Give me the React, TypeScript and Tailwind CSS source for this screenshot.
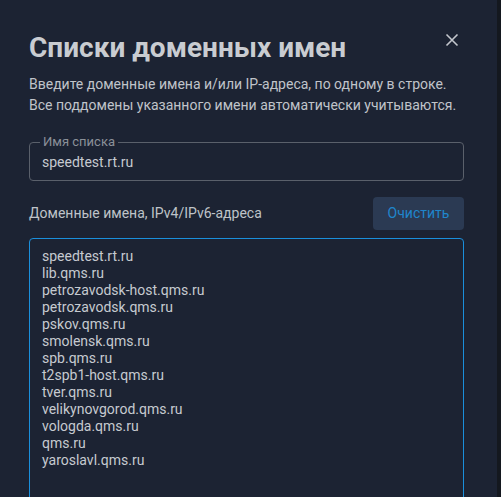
import { useState } from "react"

const domains = [
  "speedtest.rt.ru",
  "lib.qms.ru",
  "petrozavodsk-host.qms.ru",
  "petrozavodsk.qms.ru",
  "pskov.qms.ru",
  "smolensk.qms.ru",
  "spb.qms.ru",
  "t2spb1-host.qms.ru",
  "tver.qms.ru",
  "velikynovgorod.qms.ru",
  "vologda.qms.ru",
  "qms.ru",
  "yaroslavl.qms.ru",
]

export default function App() {
  const [name, setName] = useState("speedtest.rt.ru")
  const [list, setList] = useState(domains.join("\n"))

  return (
    <div className="flex h-[497px] w-[501px] overflow-hidden bg-[#13171e] font-['Roboto',sans-serif]">
      <div className="relative flex-1 bg-[#1c2333] pl-[29px] pr-[33px] pt-[30px] text-[#c6cad0]">
        <button className="absolute right-[38px] top-[33px] text-[#c3c7cd]">
          <svg width="14" height="14" viewBox="0 0 14 14" fill="none" stroke="currentColor" strokeWidth="1.6">
            <path d="M1.5 1.5 12.5 12.5M12.5 1.5 1.5 12.5" />
          </svg>
        </button>

        <h1 className="text-[28px] font-bold leading-[36px] text-[#c9ccd1]">Списки доменных имен</h1>
        <p className="mt-[8px] text-[14px] leading-[21px] text-[#c0c4ca]">
          Введите доменные имена и/или IP-адреса, по одному в строке.
          <br />
          Все поддомены указанного имени автоматически учитываются.
        </p>

        {/* outlined field with floating label */}
        <div className="relative mt-[26px] h-[39px] rounded-[4px] border border-[#5a606b] px-[12px]">
          <span className="absolute -top-[8px] left-[10px] bg-[#1c2333] px-[3px] text-[13px] leading-[14px] text-[#8b9099]">
            Имя списка
          </span>
          <input
            className="block h-[37px] w-full bg-transparent text-[14px] text-[#c6cad0] outline-none"
            value={name}
            onChange={(e) => setName(e.target.value)}
          />
        </div>

        <div className="mt-[16px] flex items-center justify-between">
          <span className="text-[14px] text-[#bfc3c9]">Доменные имена, IPv4/IPv6-адреса</span>
          <button className="h-[33px] w-[91px] rounded-[4px] bg-[#2b3a53] text-[14px] text-[#1f86cc]">Очистить</button>
        </div>

        <textarea
          className="mt-[8px] block h-[300px] w-full resize-none rounded-t-[4px] border border-[#1a8fdc] bg-transparent px-[12px] pt-[9px] text-[14px] leading-[17px] text-[#c6cad0] outline-none"
          value={list}
          onChange={(e) => setList(e.target.value)}
        />
      </div>
      <div className="w-[4px] bg-[#14181f]" />
    </div>
  )
}
